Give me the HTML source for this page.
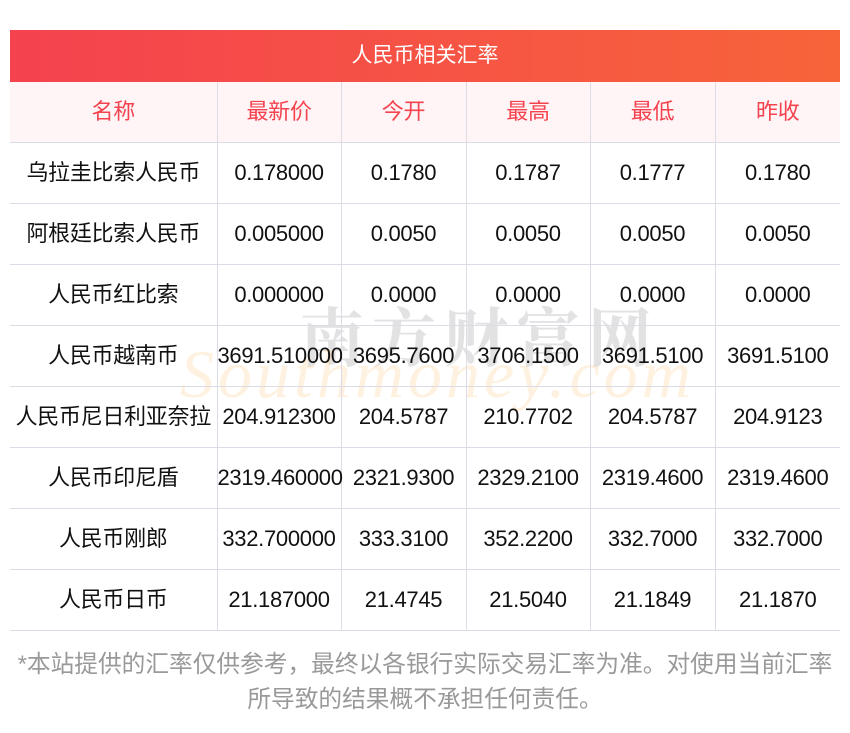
<!DOCTYPE html>
<html><head><meta charset="utf-8"><style>
body{margin:0;width:850px;height:733px;background:#fff;font-family:"Liberation Sans","Noto Sans CJK SC",sans-serif;position:relative;overflow:hidden}
.bar{position:absolute;left:10px;top:30px;width:830px;height:52px;background:linear-gradient(90deg,#f4424f,#f7643a);color:#fff;font-size:21px;line-height:52px;text-align:center}
table{position:absolute;left:10px;top:82px;width:830px;border-collapse:collapse;table-layout:fixed}
td{border:1px solid #dcdce6;text-align:center;font-size:22px;line-height:24px;color:#111;height:60px;padding:0;white-space:nowrap;overflow:visible;letter-spacing:-0.3px;vertical-align:middle}
tr:first-child td{background:#fff5f6;color:#f4424f;border-top:none}
td:first-child{border-left:none}td:last-child{border-right:none}
.wm1{position:absolute;left:300px;top:288px;font-size:64px;color:rgba(160,160,160,0.3);letter-spacing:8px;font-weight:bold;font-family:"Noto Serif CJK SC",serif}
.wm2{position:absolute;left:180px;top:335px;font-size:68px;color:rgba(250,190,110,0.22);font-style:italic;font-family:"Liberation Serif",serif;letter-spacing:4px}
.foot{position:absolute;left:0;top:648px;width:850px;text-align:center;font-size:23.7px;color:#999;line-height:35px;white-space:nowrap}
</style></head><body>
<div class="bar">人民币相关汇率</div>
<div class="wm1">南方财富网</div>
<div class="wm2">Southmoney.com</div>
<table>
<colgroup><col style="width:207px"><col style="width:124px"><col style="width:125px"><col style="width:124px"><col style="width:125px"><col style="width:125px"></colgroup>
<tr><td>名称</td><td>最新价</td><td>今开</td><td>最高</td><td>最低</td><td>昨收</td></tr>
<tr><td>乌拉圭比索人民币</td><td>0.178000</td><td>0.1780</td><td>0.1787</td><td>0.1777</td><td>0.1780</td></tr>
<tr><td>阿根廷比索人民币</td><td>0.005000</td><td>0.0050</td><td>0.0050</td><td>0.0050</td><td>0.0050</td></tr>
<tr><td>人民币红比索</td><td>0.000000</td><td>0.0000</td><td>0.0000</td><td>0.0000</td><td>0.0000</td></tr>
<tr><td>人民币越南币</td><td>3691.510000</td><td>3695.7600</td><td>3706.1500</td><td>3691.5100</td><td>3691.5100</td></tr>
<tr><td>人民币尼日利亚奈拉</td><td>204.912300</td><td>204.5787</td><td>210.7702</td><td>204.5787</td><td>204.9123</td></tr>
<tr><td>人民币印尼盾</td><td>2319.460000</td><td>2321.9300</td><td>2329.2100</td><td>2319.4600</td><td>2319.4600</td></tr>
<tr><td>人民币刚郎</td><td>332.700000</td><td>333.3100</td><td>352.2200</td><td>332.7000</td><td>332.7000</td></tr>
<tr><td>人民币日币</td><td>21.187000</td><td>21.4745</td><td>21.5040</td><td>21.1849</td><td>21.1870</td></tr>
</table>
<div class="foot">*本站提供的汇率仅供参考，最终以各银行实际交易汇率为准。对使用当前汇率<br>所导致的结果概不承担任何责任。</div>
</body></html>
